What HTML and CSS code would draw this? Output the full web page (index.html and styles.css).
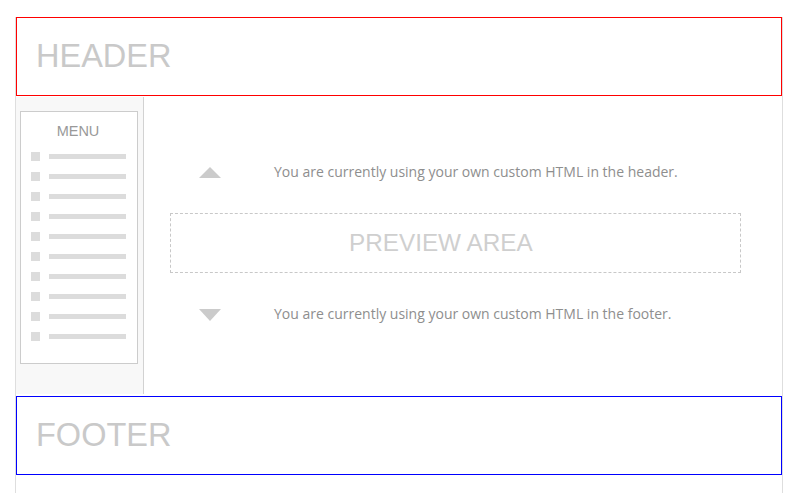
FILE: index.html
```html
<!DOCTYPE html>
<html>
<head>
<meta charset="utf-8">
<link rel="stylesheet" href="styles.css">
</head>
<body>
<div class="page">
  <div class="header"><span class="big-label">HEADER</span></div>
  <div class="main">
    <div class="sidebar">
      <div class="menu">
        <div class="menu-title">MENU</div>
        <div class="menu-items">
          <div class="item"><span class="sq"></span><span class="bar"></span></div>
          <div class="item"><span class="sq"></span><span class="bar"></span></div>
          <div class="item"><span class="sq"></span><span class="bar"></span></div>
          <div class="item"><span class="sq"></span><span class="bar"></span></div>
          <div class="item"><span class="sq"></span><span class="bar"></span></div>
          <div class="item"><span class="sq"></span><span class="bar"></span></div>
          <div class="item"><span class="sq"></span><span class="bar"></span></div>
          <div class="item"><span class="sq"></span><span class="bar"></span></div>
          <div class="item"><span class="sq"></span><span class="bar"></span></div>
          <div class="item"><span class="sq"></span><span class="bar"></span></div>
        </div>
      </div>
    </div>
    <div class="content">
      <div class="row row-top">
        <span class="tri tri-up"></span>
        <span class="note">You are currently using your own custom HTML in the header.</span>
      </div>
      <div class="preview"><span class="preview-label">PREVIEW AREA</span></div>
      <div class="row row-bottom">
        <span class="tri tri-down"></span>
        <span class="note">You are currently using your own custom HTML in the footer.</span>
      </div>
    </div>
  </div>
  <div class="footer"><span class="big-label">FOOTER</span></div>
</div>
</body>
</html>
```
FILE: styles.css
```css
html, body {
  margin: 0;
  padding: 0;
  background: #fff;
}
body {
  font-family: "Liberation Sans", Arial, sans-serif;
  overflow: hidden;
}
.page {
  margin: 17px 0 0 15px;
  width: 766px;
  min-height: 480px;
  border-left: 1px solid #dedede;
  border-right: 1px solid #dedede;
}
.header, .footer {
  height: 77px;
  display: flex;
  align-items: center;
  padding-left: 19px;
}
.header {
  border: 1px solid #ff0000;
}
.footer {
  border: 1px solid #0000ff;
  margin-top: 2px;
}
.big-label {
  font-size: 32.5px;
  line-height: 36px;
  color: #c9c9c9;
  margin-top: -1px;
}
.footer .big-label {
  margin-top: -2px;
}
.main {
  display: flex;
  height: 297px;
  margin-top: 1px;
}
.sidebar {
  background: #f8f8f8;
  border-right: 1px solid #d2d2d2;
  padding: 14px 0 0 4px;
  box-sizing: border-box;
  width: 128px;
}
.menu {
  width: 116px;
  height: 251px;
  background: #fff;
  border: 1px solid #cccccc;
}
.menu-title {
  text-align: center;
  font-size: 14.5px;
  line-height: 16px;
  color: #999;
  padding: 11px 2px 0 0;
}
.menu-items {
  display: flex;
  flex-direction: column;
  gap: 11px;
  padding: 13px 0 0 10px;
}
.item {
  display: flex;
  align-items: center;
  gap: 9px;
  height: 9px;
}
.sq {
  width: 9px;
  height: 9px;
  background: #dcdcdc;
}
.bar {
  width: 77px;
  height: 5px;
  background: #dcdcdc;
}
.content {
  flex: 1;
  padding-top: 65px;
}
.row {
  display: flex;
  align-items: center;
  height: 20px;
}
.tri {
  width: 0;
  height: 0;
  margin-left: 55px;
  border-left: 11px solid transparent;
  border-right: 11px solid transparent;
}
.tri-up {
  border-bottom: 11px solid #cbcbcb;
  margin-top: 1px;
}
.tri-down {
  border-top: 12px solid #cbcbcb;
}
.note {
  margin-left: 53px;
  font-family: "Open Sans", sans-serif;
  font-size: 14px;
  color: #8e8e8e;
  margin-top: -2px;
}
.row-bottom .note {
  margin-top: -3px;
}
.preview {
  margin: 31px 0 32px 26px;
  height: 58px;
  border: 1px dashed #c8c8c8;
  display: flex;
  align-items: center;
  padding-left: 178px;
  box-sizing: content-box;
  width: 391px;
}
.preview-label {
  font-size: 24.3px;
  line-height: 26px;
  color: #cfcfcf;
}
```
